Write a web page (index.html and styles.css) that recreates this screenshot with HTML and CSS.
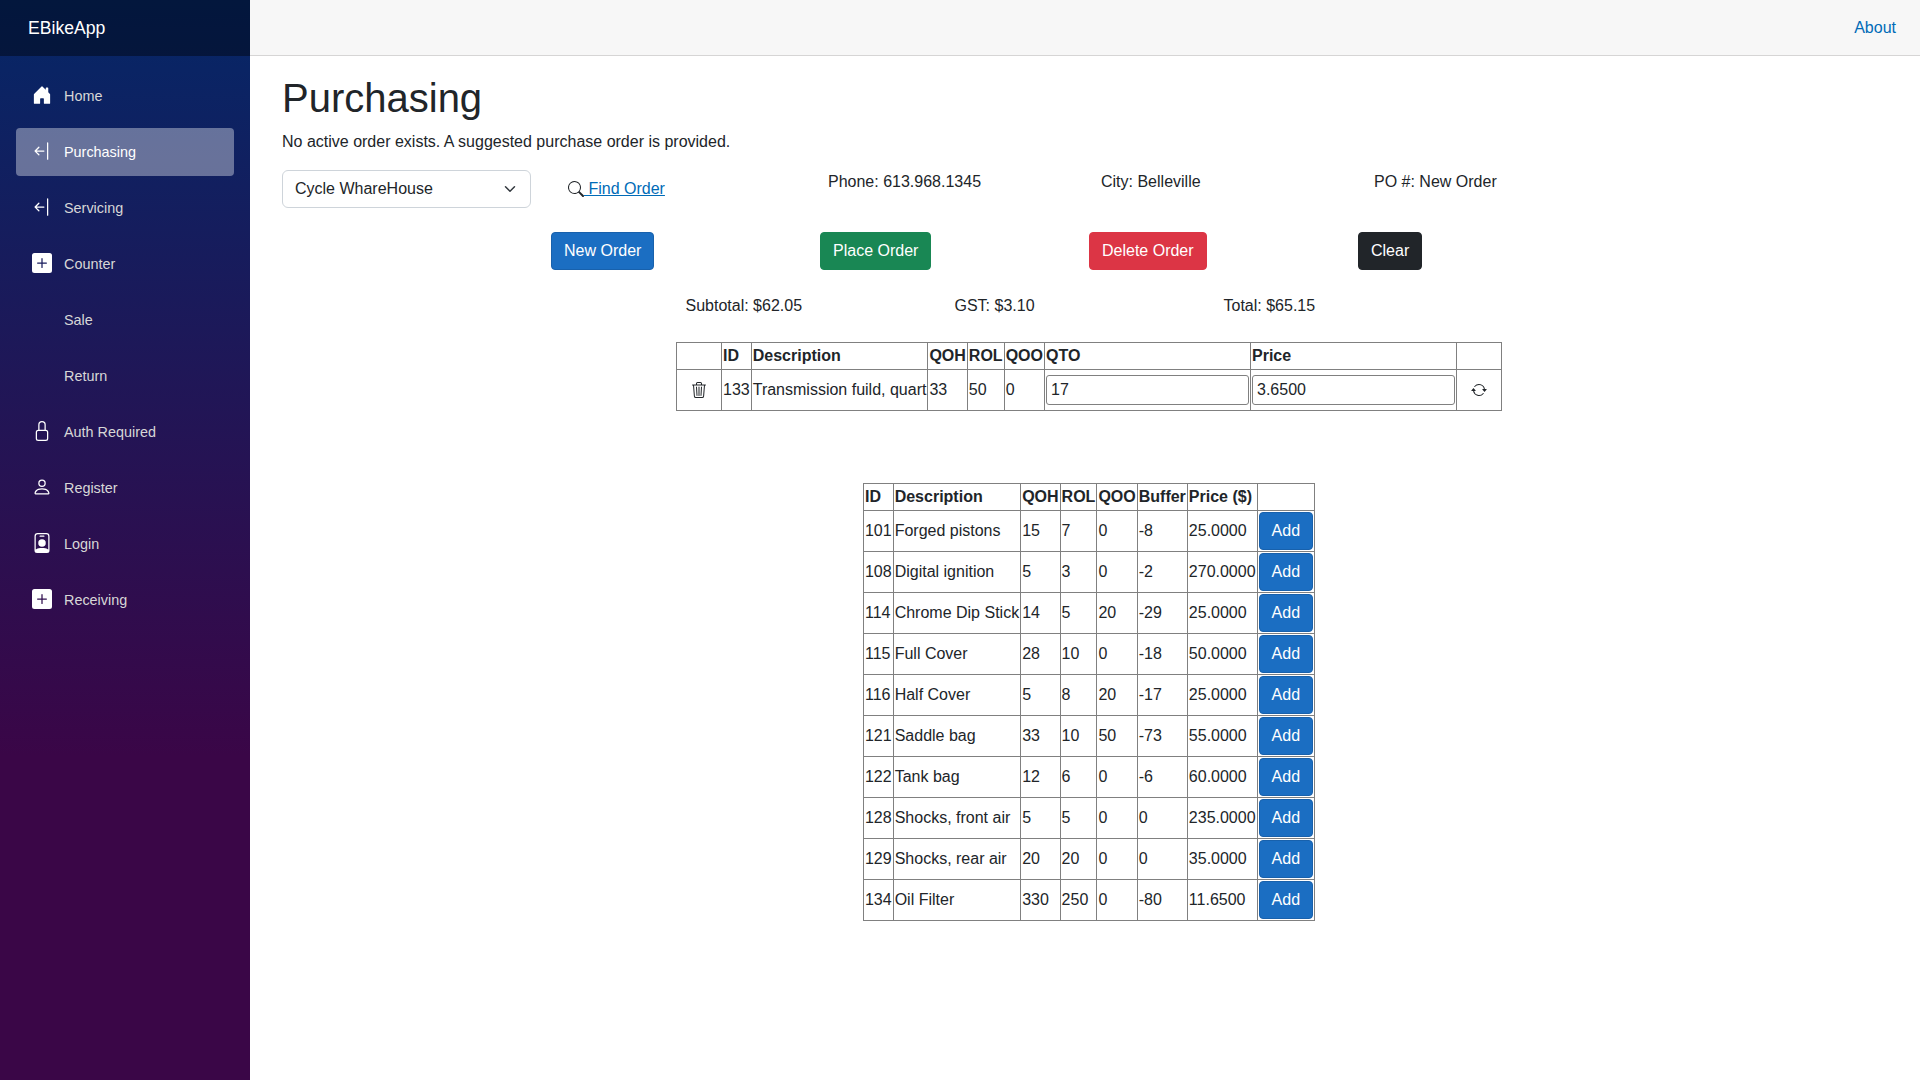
FILE: index.html
```html
<!DOCTYPE html>
<html lang="en">
<head>
    <meta charset="UTF-8">
    <meta name="viewport" content="width=device-width, initial-scale=1.0">
    <link rel="stylesheet" href="styles.css">
    <title>Purchasing</title>
</head>
<body>
    <div class="page">
        <div class="sidebar">
            <div class="brand"><a href="#">EBikeApp</a></div>
            <nav class="nav-menu">
                <a class="nav-link" href="#">
                    <svg class="nav-icon" viewBox="0 0 16 16"><path d="M6.5 14.5v-3.505c0-.245.25-.495.5-.495h2c.25 0 .5.25.5.5v3.5a.5.5 0 0 0 .5.5h4a.5.5 0 0 0 .5-.5v-7a.5.5 0 0 0-.146-.354L13 5.793V2.5a.5.5 0 0 0-.5-.5h-1a.5.5 0 0 0-.5.5v1.293L8.354 1.146a.5.5 0 0 0-.708 0l-6 6A.5.5 0 0 0 1.5 7.5v7a.5.5 0 0 0 .5.5h4a.5.5 0 0 0 .5-.5Z"/></svg>
                    Home
                </a>
                <a class="nav-link active" href="#">
                    <svg class="nav-icon" viewBox="0 0 16 16"><path d="M12.5 15a.5.5 0 0 1-.5-.5v-13a.5.5 0 0 1 1 0v13a.5.5 0 0 1-.5.5ZM10 8a.5.5 0 0 1-.5.5H3.707l2.147 2.146a.5.5 0 0 1-.708.708l-3-3a.5.5 0 0 1 0-.708l3-3a.5.5 0 1 1 .708.708L3.707 7.5H9.5a.5.5 0 0 1 .5.5Z"/></svg>
                    Purchasing
                </a>
                <a class="nav-link" href="#">
                    <svg class="nav-icon" viewBox="0 0 16 16"><path d="M12.5 15a.5.5 0 0 1-.5-.5v-13a.5.5 0 0 1 1 0v13a.5.5 0 0 1-.5.5ZM10 8a.5.5 0 0 1-.5.5H3.707l2.147 2.146a.5.5 0 0 1-.708.708l-3-3a.5.5 0 0 1 0-.708l3-3a.5.5 0 1 1 .708.708L3.707 7.5H9.5a.5.5 0 0 1 .5.5Z"/></svg>
                    Servicing
                </a>
                <a class="nav-link" href="#">
                    <svg class="nav-icon" viewBox="0 0 16 16"><path d="M2 0a2 2 0 0 0-2 2v12a2 2 0 0 0 2 2h12a2 2 0 0 0 2-2V2a2 2 0 0 0-2-2H2zm6.5 4.5v3h3a.5.5 0 0 1 0 1h-3v3a.5.5 0 0 1-1 0v-3h-3a.5.5 0 0 1 0-1h3v-3a.5.5 0 0 1 1 0z"/></svg>
                    Counter
                </a>
                <a class="nav-link" href="#"><span class="nav-icon"></span>Sale</a>
                <a class="nav-link" href="#"><span class="nav-icon"></span>Return</a>
                <a class="nav-link" href="#">
                    <svg class="nav-icon" viewBox="0 0 16 16"><path d="M8 1a2 2 0 0 1 2 2v4H6V3a2 2 0 0 1 2-2zm3 6V3a3 3 0 0 0-6 0v4a2 2 0 0 0-2 2v5a2 2 0 0 0 2 2h6a2 2 0 0 0 2-2V9a2 2 0 0 0-2-2zM5 8h6a1 1 0 0 1 1 1v5a1 1 0 0 1-1 1H5a1 1 0 0 1-1-1V9a1 1 0 0 1 1-1z"/></svg>
                    Auth Required
                </a>
                <a class="nav-link" href="#">
                    <svg class="nav-icon" viewBox="0 0 16 16"><path d="M8 8a3 3 0 1 0 0-6 3 3 0 0 0 0 6Zm2-3a2 2 0 1 1-4 0 2 2 0 0 1 4 0Zm4 8c0 1-1 1-1 1H3s-1 0-1-1 1-4 6-4 6 3 6 4Zm-1-.004c-.001-.246-.154-.986-.832-1.664C11.516 10.68 10.289 10 8 10c-2.29 0-3.516.68-4.168 1.332-.678.678-.83 1.418-.832 1.664h10Z"/></svg>
                    Register
                </a>
                <a class="nav-link" href="#">
                    <svg class="nav-icon" viewBox="0 0 16 16"><path d="M6.5 2a.5.5 0 0 0 0 1h3a.5.5 0 0 0 0-1h-3zM11 8a3 3 0 1 1-6 0 3 3 0 0 1 6 0z"/><path d="M4.5 0A2.5 2.5 0 0 0 2 2.5V14a2 2 0 0 0 2 2h8a2 2 0 0 0 2-2V2.5A2.5 2.5 0 0 0 11.5 0h-7zM3 2.5A1.5 1.5 0 0 1 4.5 1h7A1.5 1.5 0 0 1 13 2.5v10.795a4.2 4.2 0 0 0-.776-.492C11.392 12.387 10.063 12 8 12s-3.392.387-4.224.803a4.2 4.2 0 0 0-.776.492V2.5z"/></svg>
                    Login
                </a>
                <a class="nav-link" href="#">
                    <svg class="nav-icon" viewBox="0 0 16 16"><path d="M2 0a2 2 0 0 0-2 2v12a2 2 0 0 0 2 2h12a2 2 0 0 0 2-2V2a2 2 0 0 0-2-2H2zm6.5 4.5v3h3a.5.5 0 0 1 0 1h-3v3a.5.5 0 0 1-1 0v-3h-3a.5.5 0 0 1 0-1h3v-3a.5.5 0 0 1 1 0z"/></svg>
                    Receiving
                </a>
            </nav>
        </div>

        <main class="main">
            <div class="top-row"><a href="#">About</a></div>
            <article class="content">
                <h1>Purchasing</h1>
                <p class="status">No active order exists. A suggested purchase order is provided.</p>

                <div class="info-row">
                    <div class="info-col">
                        <select class="form-select">
                            <option>Cycle WhareHouse</option>
                        </select>
                    </div>
                    <div class="info-col">
                        <a class="find-link" href="#">
                            <svg class="search-icon" viewBox="0 0 16 16"><path d="M11.742 10.344a6.5 6.5 0 1 0-1.397 1.398h-.001c.03.04.062.078.098.115l3.85 3.85a1 1 0 0 0 1.415-1.414l-3.85-3.85a1.007 1.007 0 0 0-.115-.1zM12 6.5a5.5 5.5 0 1 1-11 0 5.5 5.5 0 0 1 11 0z"/></svg> Find Order</a>
                    </div>
                    <div class="info-col">Phone: 613.968.1345</div>
                    <div class="info-col">City: Belleville</div>
                    <div class="info-col">PO #: New Order</div>
                </div>

                <div class="action-row">
                    <div class="action-col"><button class="btn btn-primary">New Order</button></div>
                    <div class="action-col"><button class="btn btn-success">Place Order</button></div>
                    <div class="action-col"><button class="btn btn-danger">Delete Order</button></div>
                    <div class="action-col"><button class="btn btn-dark">Clear</button></div>
                </div>

                <div class="totals-row">
                    <div class="action-col">Subtotal: $62.05</div>
                    <div class="action-col">GST: $3.10</div>
                    <div class="action-col">Total: $65.15</div>
                </div>

                <table class="grid order-table">
                    <thead>
                        <tr>
                            <th class="icon-col"></th>
                            <th>ID</th>
                            <th>Description</th>
                            <th>QOH</th>
                            <th>ROL</th>
                            <th>QOO</th>
                            <th>QTO</th>
                            <th>Price</th>
                            <th class="icon-col"></th>
                        </tr>
                    </thead>
                    <tbody>
                        <tr>
                            <td class="icon-cell">
                                <svg class="cell-icon" viewBox="0 0 16 16"><path d="M6.5 1h3a.5.5 0 0 1 .5.5v1H6v-1a.5.5 0 0 1 .5-.5ZM11 2.5v-1A1.5 1.5 0 0 0 9.5 0h-3A1.5 1.5 0 0 0 5 1.5v1H2.506a.58.58 0 0 0-.01 0H1.5a.5.5 0 0 0 0 1h.538l.853 10.66A2 2 0 0 0 4.885 16h6.23a2 2 0 0 0 1.994-1.84l.853-10.66h.538a.5.5 0 0 0 0-1h-.995a.59.59 0 0 0-.01 0H11Zm1.958 1-.846 10.58a1 1 0 0 1-.997.92h-6.23a1 1 0 0 1-.997-.92L3.042 3.5h9.916Zm-7.487 1a.5.5 0 0 1 .528.47l.5 8.5a.5.5 0 0 1-.998.06L5 5.03a.5.5 0 0 1 .47-.53Zm5.058 0a.5.5 0 0 1 .47.53l-.5 8.5a.5.5 0 1 1-.998-.06l.5-8.5a.5.5 0 0 1 .528-.47ZM8 4.5a.5.5 0 0 1 .5.5v8.5a.5.5 0 0 1-1 0V5a.5.5 0 0 1 .5-.5Z"/></svg>
                            </td>
                            <td>133</td>
                            <td>Transmission fuild, quart</td>
                            <td>33</td>
                            <td>50</td>
                            <td>0</td>
                            <td><input class="cell-input" type="text" value="17"></td>
                            <td><input class="cell-input" type="text" value="3.6500"></td>
                            <td class="icon-cell">
                                <svg class="cell-icon" viewBox="0 0 16 16"><path d="M11.534 7h3.932a.25.25 0 0 1 .192.41l-1.966 2.36a.25.25 0 0 1-.384 0l-1.966-2.36a.25.25 0 0 1 .192-.41zm-11 2h3.932a.25.25 0 0 0 .192-.41L2.692 6.23a.25.25 0 0 0-.384 0L.342 8.59A.25.25 0 0 0 .534 9z"/><path d="M8 3c-1.552 0-2.94.707-3.857 1.818a.5.5 0 1 1-.771-.636A6.002 6.002 0 0 1 13.917 7H12.9A5.002 5.002 0 0 0 8 3zM3.1 9a5.002 5.002 0 0 0 8.757 2.182.5.5 0 1 1 .771.636A6.002 6.002 0 0 1 2.083 9H3.1z"/></svg>
                            </td>
                        </tr>
                    </tbody>
                </table>

                <table class="grid stock-table">
                    <thead>
                        <tr>
                            <th>ID</th>
                            <th>Description</th>
                            <th>QOH</th>
                            <th>ROL</th>
                            <th>QOO</th>
                            <th>Buffer</th>
                            <th>Price ($)</th>
                            <th></th>
                        </tr>
                    </thead>
                    <tbody>
                        <tr><td>101</td><td>Forged pistons</td><td>15</td><td>7</td><td>0</td><td>-8</td><td>25.0000</td><td><button class="btn btn-primary">Add</button></td></tr>
                        <tr><td>108</td><td>Digital ignition</td><td>5</td><td>3</td><td>0</td><td>-2</td><td>270.0000</td><td><button class="btn btn-primary">Add</button></td></tr>
                        <tr><td>114</td><td>Chrome Dip Stick</td><td>14</td><td>5</td><td>20</td><td>-29</td><td>25.0000</td><td><button class="btn btn-primary">Add</button></td></tr>
                        <tr><td>115</td><td>Full Cover</td><td>28</td><td>10</td><td>0</td><td>-18</td><td>50.0000</td><td><button class="btn btn-primary">Add</button></td></tr>
                        <tr><td>116</td><td>Half Cover</td><td>5</td><td>8</td><td>20</td><td>-17</td><td>25.0000</td><td><button class="btn btn-primary">Add</button></td></tr>
                        <tr><td>121</td><td>Saddle bag</td><td>33</td><td>10</td><td>50</td><td>-73</td><td>55.0000</td><td><button class="btn btn-primary">Add</button></td></tr>
                        <tr><td>122</td><td>Tank bag</td><td>12</td><td>6</td><td>0</td><td>-6</td><td>60.0000</td><td><button class="btn btn-primary">Add</button></td></tr>
                        <tr><td>128</td><td>Shocks, front air</td><td>5</td><td>5</td><td>0</td><td>0</td><td>235.0000</td><td><button class="btn btn-primary">Add</button></td></tr>
                        <tr><td>129</td><td>Shocks, rear air</td><td>20</td><td>20</td><td>0</td><td>0</td><td>35.0000</td><td><button class="btn btn-primary">Add</button></td></tr>
                        <tr><td>134</td><td>Oil Filter</td><td>330</td><td>250</td><td>0</td><td>-80</td><td>11.6500</td><td><button class="btn btn-primary">Add</button></td></tr>
                    </tbody>
                </table>
            </article>
        </main>
    </div>
</body>
</html>
```

FILE: styles.css
```css
* {
    box-sizing: border-box;
}

body {
    margin: 0;
    font-family: "Liberation Sans", Arial, sans-serif;
    font-size: 16px;
    line-height: 1.5;
    color: #212529;
    background-color: #fff;
}

.page {
    display: flex;
    min-height: 100vh;
}

/* Sidebar */
.sidebar {
    flex: 0 0 250px;
    background-image: linear-gradient(180deg, rgb(5, 39, 103) 0%, #3a0647 70%);
}

.brand {
    display: flex;
    align-items: center;
    height: 56px;
    padding-left: 28px;
    background-color: rgba(0, 0, 0, 0.4);
}

.brand a {
    color: #fff;
    font-size: 17.6px;
    text-decoration: none;
}

.nav-menu {
    display: flex;
    flex-direction: column;
    gap: 8px;
    padding: 16px;
}

.nav-link {
    display: flex;
    align-items: center;
    height: 48px;
    padding-left: 16px;
    border-radius: 4px;
    color: #d7d7d7;
    font-size: 14.4px;
    line-height: 48px;
    text-decoration: none;
}

.nav-link.active {
    background-color: rgba(255, 255, 255, 0.37);
    color: #fff;
}

.nav-icon {
    flex: none;
    width: 20px;
    height: 20px;
    margin-right: 12px;
    margin-bottom: 2px;
    fill: #fff;
}

/* Main area */
.main {
    flex: 1;
}

.top-row {
    display: flex;
    align-items: center;
    justify-content: flex-end;
    height: 56px;
    padding-right: 24px;
    background-color: #f7f7f7;
    border-bottom: 1px solid #d6d5d5;
}

a {
    color: #006bb7;
}

.top-row a {
    text-decoration: none;
}

.content {
    padding: 17.6px 24px 0 32px;
}

h1 {
    margin: 0 0 8px;
    font-size: 40px;
    font-weight: 500;
    line-height: 1.2;
}

.status {
    margin: 0 0 16px;
}

.info-row {
    display: flex;
    margin: 0 -12px;
}

.info-col {
    flex: 0 0 16.6667%;
    padding: 0 12px;
}

.form-select {
    display: block;
    width: 100%;
    height: 38px;
    padding: 6px 36px 6px 12px;
    border: 1px solid #ced4da;
    border-radius: 6px;
    background-color: #fff;
    background-image: url("data:image/svg+xml,%3csvg xmlns='http://www.w3.org/2000/svg' viewBox='0 0 16 16'%3e%3cpath fill='none' stroke='%23343a40' stroke-linecap='round' stroke-linejoin='round' stroke-width='2' d='m2 5 6 6 6-6'/%3e%3c/svg%3e");
    background-repeat: no-repeat;
    background-position: right 12px center;
    background-size: 16px 12px;
    color: #212529;
    font-family: inherit;
    font-size: 16px;
    line-height: 1.5;
    appearance: none;
}

.find-link {
    display: inline-block;
    margin: 7px 0 0 13px;
}

.search-icon {
    width: 16px;
    height: 16px;
    fill: #212529;
    vertical-align: -3px;
}

.action-row {
    display: flex;
    margin-top: 24px;
    padding-left: 16.6667%;
}

.totals-row {
    display: flex;
    margin-top: 24px;
    padding-left: 25%;
}

.action-col {
    flex: 0 0 269px;
}

.btn {
    display: inline-block;
    padding: 6px 12px;
    border: 1px solid transparent;
    border-radius: 4px;
    color: #fff;
    font-family: inherit;
    font-size: 16px;
    line-height: 24px;
}

.btn-primary {
    background-color: #1b6ec2;
    border-color: #1861ac;
}

.btn-success {
    background-color: #198754;
    border-color: #198754;
}

.btn-danger {
    background-color: #dc3545;
    border-color: #dc3545;
}

.btn-dark {
    background-color: #212529;
    border-color: #212529;
}

/* Tables */
.grid {
    margin-left: auto;
    margin-right: auto;
    border-collapse: collapse;
}

.grid th,
.grid td {
    padding: 1px;
    border: 1px solid #808080;
    text-align: left;
    white-space: nowrap;
}

.order-table {
    margin-top: 24px;
}

.stock-table {
    margin-top: 72px;
}

.icon-col {
    width: 45px;
}

.grid td.icon-cell {
    text-align: center;
}

.cell-icon {
    display: inline-block;
    width: 16px;
    height: 16px;
    fill: #212529;
    vertical-align: middle;
}

.cell-input {
    display: block;
    width: 203px;
    height: 30px;
    margin: 4px 0;
    padding: 1px 4px;
    border: 1px solid #808080;
    border-radius: 3px;
    color: #212529;
    font-family: inherit;
    font-size: 16px;
}

.stock-table .btn {
    display: block;
}
```
